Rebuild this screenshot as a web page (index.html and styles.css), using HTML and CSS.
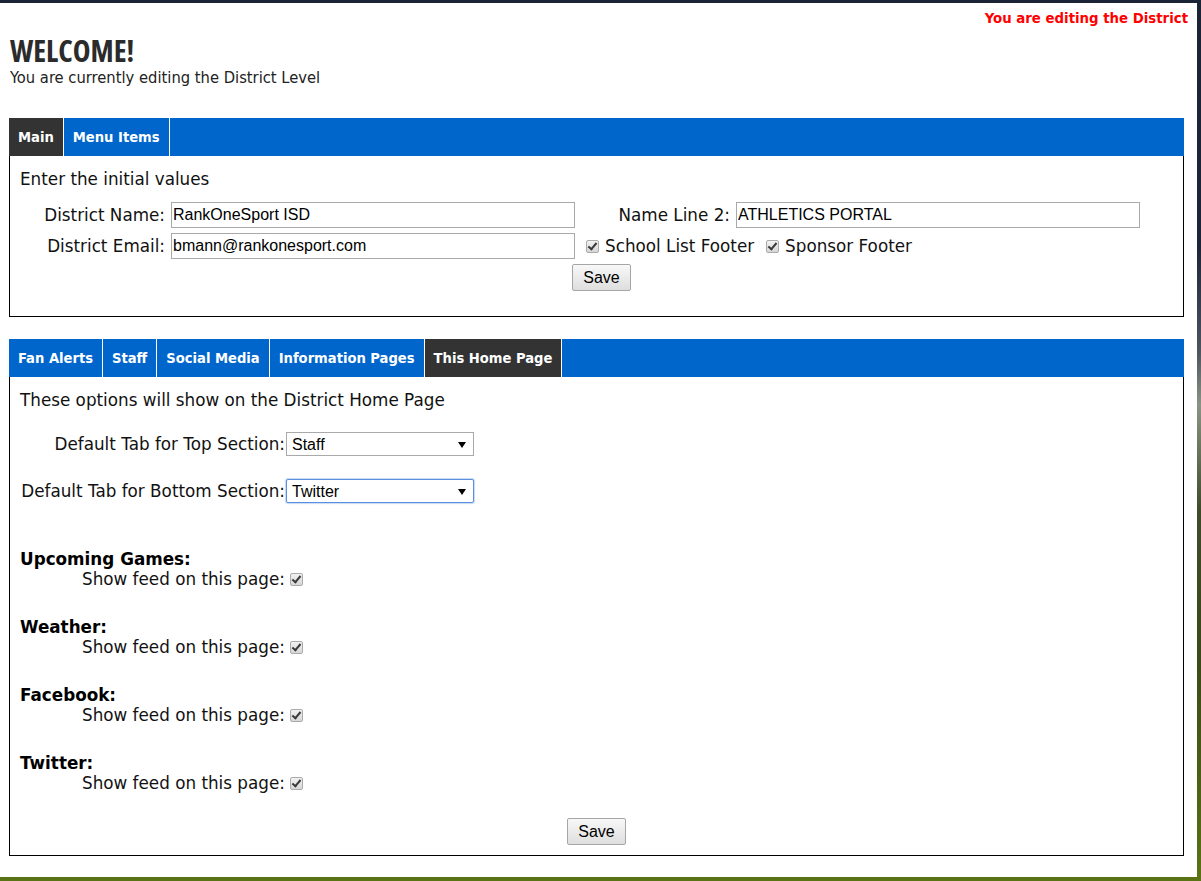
FILE: index.html
```html
<!DOCTYPE html>
<html lang="en">
<head>
    <meta charset="UTF-8">
    <title>District Settings</title>
    <link rel="stylesheet" href="styles.css">
</head>
<body>
    <div class="page">
        <div class="notice">You are editing the District</div>

        <div class="welcome">
            <h1>WELCOME!</h1>
            <p>You are currently editing the District Level</p>
        </div>

        <div class="panel">
            <ul class="tabs">
                <li class="active">Main</li>
                <li>Menu Items</li>
            </ul>
            <div class="panel-body panel-body-main">
                <p class="intro">Enter the initial values</p>
                <div class="field-grid">
                    <label class="field-label" for="district-name">District Name:</label>
                    <input class="text-input" type="text" id="district-name" value="RankOneSport ISD">
                    <label class="field-label" for="name-line-2">Name Line 2:</label>
                    <input class="text-input" type="text" id="name-line-2" value="ATHLETICS PORTAL">

                    <label class="field-label" for="district-email">District Email:</label>
                    <input class="text-input" type="text" id="district-email" value="bmann@rankonesport.com">
                    <div class="footer-options">
                        <label><input class="check" type="checkbox" checked> School List Footer</label>
                        <label><input class="check" type="checkbox" checked> Sponsor Footer</label>
                    </div>
                </div>
                <div class="actions">
                    <button class="btn" type="button">Save</button>
                </div>
            </div>
        </div>

        <div class="panel panel-second">
            <ul class="tabs">
                <li>Fan Alerts</li>
                <li>Staff</li>
                <li>Social Media</li>
                <li>Information Pages</li>
                <li class="active">This Home Page</li>
            </ul>
            <div class="panel-body panel-body-home">
                <p class="intro">These options will show on the District Home Page</p>

                <div class="select-grid">
                    <label class="field-label" for="top-tab">Default Tab for Top Section:</label>
                    <span class="select-wrap">
                        <select class="select" id="top-tab">
                            <option>Staff</option>
                            <option>Fan Alerts</option>
                            <option>Twitter</option>
                        </select>
                    </span>
                    <label class="field-label" for="bottom-tab">Default Tab for Bottom Section:</label>
                    <span class="select-wrap">
                        <select class="select select-focus" id="bottom-tab">
                            <option>Twitter</option>
                            <option>Staff</option>
                            <option>Facebook</option>
                        </select>
                    </span>
                </div>

                <div class="feeds">
                    <div class="feed">
                        <h3>Upcoming Games:</h3>
                        <label class="feed-toggle">Show feed on this page: <input class="check" type="checkbox" checked></label>
                    </div>
                    <div class="feed">
                        <h3>Weather:</h3>
                        <label class="feed-toggle">Show feed on this page: <input class="check" type="checkbox" checked></label>
                    </div>
                    <div class="feed">
                        <h3>Facebook:</h3>
                        <label class="feed-toggle">Show feed on this page: <input class="check" type="checkbox" checked></label>
                    </div>
                    <div class="feed">
                        <h3>Twitter:</h3>
                        <label class="feed-toggle">Show feed on this page: <input class="check" type="checkbox" checked></label>
                    </div>
                </div>

                <div class="actions">
                    <button class="btn" type="button">Save</button>
                </div>
            </div>
        </div>
    </div>
</body>
</html>
```

FILE: styles.css
```css
html, body {
    height: 100%;
}
body {
    margin: 0;
    font-family: "DejaVu Sans", Verdana, sans-serif;
    font-size: 16.8px;
    line-height: 20px;
    color: #111;
    background: linear-gradient(to bottom, #1b2337 0%, #1d2638 28%, #4d5560 40%, #8a9484 46%, #3e4b2a 58%, #3a4a18 75%, #5a7414 100%);
    overflow: hidden;
}
.page {
    width: 1197px;
    height: 874px;
    margin-top: 3px;
    background: #fff;
    overflow: hidden;
}
.notice {
    text-align: right;
    padding: 5px 9px 0 0;
    font-family: "DejaVu Sans Condensed", "DejaVu Sans", sans-serif;
    font-weight: bold;
    font-size: 14.8px;
    color: #ff0000;
}
.welcome {
    padding-left: 10px;
}
.welcome h1 {
    margin: 6px 0 0;
    font-family: "Open Sans", sans-serif;
    font-stretch: 75%;
    font-weight: 700;
    font-size: 30px;
    line-height: 34px;
    color: #2b2b2b;
}
.welcome p {
    margin: 0;
    font-family: "DejaVu Sans Condensed", "DejaVu Sans", sans-serif;
    font-size: 16.4px;
    color: #222;
}
.panel {
    width: 1175px;
    margin: 30px 0 0 9px;
}
.panel-second {
    margin-top: 22px;
}
.tabs {
    display: flex;
    margin: 0;
    padding: 0;
    list-style: none;
    background: #0066cc;
}
.tabs li {
    padding: 0 9px;
    border-right: 1px solid #fff;
    font-family: "DejaVu Sans Condensed", "DejaVu Sans", sans-serif;
    font-weight: bold;
    font-size: 14.6px;
    line-height: 38px;
    color: #fff;
}
.tabs li.active {
    background: #333;
}
.panel-body {
    border: 1px solid #000;
    border-top: none;
}
.panel-body-main {
    padding: 13px 0 25px 10px;
}
.panel-body-home {
    padding: 13px 10px 10px 10px;
}
.intro {
    margin: 0;
}
.field-grid {
    display: grid;
    grid-template-columns: 145px 404px 149px 404px;
    grid-auto-rows: 26px;
    column-gap: 6px;
    row-gap: 5px;
    align-items: center;
    margin-top: 13px;
}
.field-label {
    justify-self: end;
    white-space: nowrap;
}
.text-input {
    box-sizing: border-box;
    width: 404px;
    height: 26px;
    padding: 0 1px;
    border: 1px solid #a9a9a9;
    font-family: "Liberation Sans", Arial, sans-serif;
    font-size: 16px;
    color: #000;
}
.footer-options {
    grid-column: 3 / 5;
    display: flex;
    gap: 8px;
    padding-left: 1px;
    white-space: nowrap;
}
.footer-options label {
    display: flex;
    align-items: center;
    gap: 6px;
}
.check {
    appearance: none;
    -webkit-appearance: none;
    position: relative;
    box-sizing: border-box;
    width: 13px;
    height: 13px;
    margin: 0 0 0 4px;
    border: 1px solid #ababab;
    border-radius: 2px;
    background: linear-gradient(#f2f2f2, #d6d6d6);
    vertical-align: -1px;
}
.check:checked::after {
    content: "";
    position: absolute;
    left: 3px;
    top: 0px;
    width: 3px;
    height: 7px;
    border: solid #3a3a3a;
    border-width: 0 2px 2px 0;
    transform: rotate(40deg);
}
.actions {
    display: flex;
    justify-content: center;
    margin-top: 5px;
}
.btn {
    box-sizing: border-box;
    height: 27px;
    padding: 0 10px;
    border: 1px solid #a6a6a6;
    border-radius: 2px;
    background: linear-gradient(#f8f8f8, #dedede);
    font-family: "Liberation Sans", Arial, sans-serif;
    font-size: 16px;
    color: #000;
}
.select-grid {
    display: grid;
    grid-template-columns: 265px 188px;
    grid-auto-rows: 24px;
    column-gap: 1px;
    row-gap: 23px;
    align-items: center;
    margin-top: 22px;
}
.select-wrap {
    position: relative;
    display: block;
}
.select-wrap::after {
    content: "";
    position: absolute;
    right: 8px;
    top: 10px;
    border-left: 4px solid transparent;
    border-right: 4px solid transparent;
    border-top: 6px solid #000;
    pointer-events: none;
}
.select {
    appearance: none;
    -webkit-appearance: none;
    box-sizing: border-box;
    display: block;
    width: 188px;
    height: 24px;
    padding: 0 5px;
    border: 1px solid #a9a9a9;
    border-radius: 0;
    background: #fff;
    font-family: "Liberation Sans", Arial, sans-serif;
    font-size: 16px;
    color: #000;
}
.select-focus {
    border-color: #5d8fdf;
    border-radius: 2px;
    box-shadow: 0 0 1px 1px rgba(93, 143, 223, 0.35);
}
.feeds {
    margin-top: 46px;
}
.feed {
    margin-bottom: 28px;
}
.feed:last-child {
    margin-bottom: 0;
}
.feed h3 {
    margin: 0;
    font-size: 16.8px;
    font-weight: bold;
    color: #000;
}
.feed-toggle {
    display: block;
    padding-left: 62px;
}
.feed-toggle .check {
    margin-left: 0;
}
.panel-body-home .actions {
    margin-top: 25px;
}
```
